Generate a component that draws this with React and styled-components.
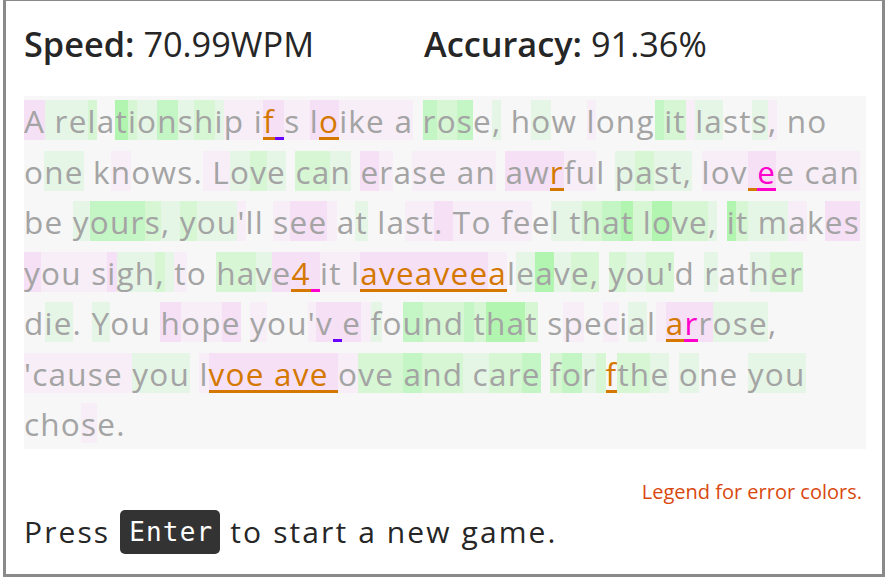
import React from 'react';
import styled, { createGlobalStyle } from 'styled-components';

const GlobalStyle = createGlobalStyle`
  body {
    margin: 0;
    background: #fff;
    font-family: "Open Sans", "DejaVu Sans", sans-serif;
    color: #262626;
  }
`;

const Frame = styled.div`
  box-sizing: border-box;
  width: 882px;
  height: 579px;
  margin: -2px 0 0 3px;
  border: 3px solid #8a8a8a;
  padding: 0 16px 0 18px;
  display: flex;
  flex-direction: column;
`;

const Stats = styled.div`
  display: flex;
  gap: 110px;
  height: 95px;
  flex-shrink: 0;
  align-items: flex-start;
  padding-top: 23px;
  box-sizing: border-box;
  font-size: 34.3px;
`;

const Stat = styled.div`
  line-height: 40px;
  b {
    font-weight: 600;
  }
`;

const Passage = styled.div`
  flex-shrink: 0;
  background: #f7f7f7;
  color: #a4a4a4;
  font-size: 31.5px;
  letter-spacing: 1.22px;
  line-height: 50.5px;
  height: 353px;
`;

const Line = styled.div`
  white-space: pre;
`;

const bgs = {
  p1: '#f7eef7',
  p2: '#f6e0f6',
  g1: '#e6f6e6',
  g2: '#d6f6d4',
  g3: '#c4f5c4',
  g4: '#b2f5b0',
};

const marks = {
  o: { color: '#d47800', line: '#d47800' },
  m: { color: '#ff00cc', line: '#ff00cc' },
  v: { line: '#6a00ff' },
  mu: { line: '#ff00cc' },
  ou: { line: '#d47800' },
};

const layers = (bg, mark) => {
  const out = [];
  if (marks[mark]) {
    const c = marks[mark].line;
    out.push(`linear-gradient(${c}, ${c}) 0 38px / 100% 3px no-repeat`);
  }
  if (bgs[bg]) {
    const c = bgs[bg];
    out.push(`linear-gradient(${c}, ${c}) 0 1px / 100% 40px no-repeat`);
  }
  return out.length ? out.join(', ') : 'none';
};

const Char = styled.span`
  background: ${(p) => layers(p.$bg, p.$mark)};
  color: ${(p) => (marks[p.$mark] && marks[p.$mark].color) || 'inherit'};
`;

const Legend = styled.div`
  flex-shrink: 0;
  margin-top: 31px;
  padding-right: 4px;
  text-align: right;
  color: #d9480f;
  font-size: 20px;
  line-height: 24px;
`;

const Prompt = styled.div`
  flex-shrink: 0;
  font-size: 30px;
  letter-spacing: 2.1px;
  line-height: 44px;
  margin-top: 6px;
`;

const Key = styled.kbd`
  display: inline-block;
  vertical-align: top;
  background: #333;
  color: #fff;
  font-family: "DejaVu Sans Mono", monospace;
  font-size: 26px;
  letter-spacing: 1.2px;
  line-height: 44px;
  padding: 0 7px 0 9px;
  border-radius: 5px;
`;

const lines = [
  [
    ['A', 'p2'], [' re', 'g1'], ['l', 'g2'], ['a', ''], ['t', 'g4'], ['i', 'g2'],
    ['o', 'g1'], ['n', 'g3'], ['s', 'g1'], ['h', 'g2'], ['i', 'g1'], ['p ', 'p1'],
    ['i', 'p1'], ['f', 'p2', 'o'], [' ', 'p2', 'v'], ['s ', 'p1'], ['l', 'p2'],
    ['o', 'p2', 'o'], ['ike a', 'p1'], [' ', ''], ['r', 'g3'], ['o', 'g2'],
    ['s', 'g3'], ['e', ''], [',', 'g1'], [' h', ''], ['o', 'g1'], ['w ', ''],
    ['l', 'p1'], ['ong', ''], [' ', 'g3'], ['it', 'g2'], [' ', 'p1'], ['la', 'g1'],
    ['st', ''], ['s', 'g1'], [',', 'p1'], [' no', ''],
  ],
  [
    ['o', ''], ['ne', 'g1'], [' k', ''], ['n', 'p1'], ['ows.', ''], [' L', 'p1'],
    ['o', 'g1'], ['v', 'g2'], ['e', 'g1'], [' ', ''], ['ca', 'g2'], ['n', 'g1'],
    [' ', ''], ['e', 'p2'], ['r', 'p1'], ['a', ''], ['se ', 'p1'], ['an', 'p1'],
    [' ', ''], ['aw', 'p2'], ['r', 'p2', 'o'], ['fu', 'p1'], ['l ', ''], ['p', 'g1'],
    ['a', 'g2'], ['st,', 'g1'], [' ', ''], ['lov', 'p1'], [' ', 'p2', 'ou'],
    ['e', 'p2', 'm'], ['e can', 'p1'],
  ],
  [
    ['be ', ''], ['y', 'g1'], ['our', 'g3'], ['s', 'g2'], [', ', 'g1'], ['y', 'g2'],
    ['ou', 'g1'], ["'", 'p1'], ['ll ', ''], ['s', 'p1'], ['ee', 'p2'], [' ', 'p1'],
    ['a', ''], ['t', 'g1'], [' la', ''], ['st', 'p1'], ['. ', 'p2'], ['To fe', 'p1'],
    ['e', ''], ['l ', 'g1'], ['t', 'g1'], ['h', 'g2'], ['a', 'g3'], ['t', 'g4'],
    [' l', 'g2'], ['o', 'g4'], ['ve', 'g2'], [',', 'g1'], [' ', ''], ['i', 'g4'],
    ['t', 'g2'], [' m', 'g1'], ['a', 'p1'], ['k', ''], ['es', 'p2'],
  ],
  [
    ['y', 'p2'], ['ou s', 'p1'], ['i', 'p2'], ['gh', 'g1'], [',', 'g2'], [' ', 'g1'],
    ['t', 'p1'], ['o ', ''], ['ha', 'g2'], ['v', 'g1'], ['e', 'p2'], ['4', 'p2', 'o'],
    [' ', 'p2', 'mu'], ['it l', 'p1'], ['aveavee', 'p2', 'o'], ['a', 'p1', 'o'],
    ['l', ''], ['e', 'g1'], ['a', 'g4'], ['v', 'g1'], ['e,', 'g2'], [' ', ''],
    ['y', 'g2'], ['o', 'g1'], ["u'", 'g2'], ['d ', ''], ['r', 'g1'], ['at', ''],
    ['h', 'g1'], ['er', 'g2'],
  ],
  [
    ['d', ''], ['ie', 'g1'], ['. ', ''], ['Y', 'g1'], ['ou ', ''], ['h', 'p2'],
    ['op', 'p1'], ['e', 'p2'], [' ', ''], ['y', 'p1'], ['ou', ''], ["'", 'p1'],
    ['v', 'p2'], [' ', 'p2', 'v'], ['e', 'p2'], [' ', 'p1'], ['f', 'g1'], ['o', ''],
    ['u', 'g3'], ['nd', 'g2'], [' ', 'g3'], ['t', 'g2'], ['ha', 'g4'], ['t', 'g2'],
    [' s', ''], ['p', 'p1'], ['e', ''], ['c', 'p1'], ['i', ''], ['a', 'g1'], ['l', ''],
    [' ', 'p1'], ['a', 'p2', 'o'], ['r', 'p2', 'm'], ['r', 'p2'], ['ose', 'g1'],
    [',', ''],
  ],
  [
    ["'cause ", 'p1'], ['you', 'g1'], [' ', ''], ['l', 'p1'], ['voe ave ', 'p2', 'o'],
    ['o', 'p1'], ['ve ', 'g2'], ['a', 'g3'], ['nd', 'g2'], [' c', 'g1'], ['ar', 'g2'],
    ['e', 'g3'], [' ', ''], ['f', 'g2'], ['o', 'g3'], ['r', 'g1'], [' ', 'g2'],
    ['f', '', 'o'], ['th', 'g2'], ['e', 'g1'], [' ', ''], ['o', 'g1'], ['ne ', ''],
    ['you', 'g1'],
  ],
  [['cho', ''], ['s', 'p1'], ['e.', '']],
];

export default function App() {
  return (
    <>
      <GlobalStyle />
      <Frame>
        <Stats>
          <Stat>
            <b>Speed:</b> 70.99WPM
          </Stat>
          <Stat>
            <b>Accuracy:</b> 91.36%
          </Stat>
        </Stats>
        <Passage>
          {lines.map((line, li) => (
            <Line key={li}>
              {line.map(([text, bg, mark], i) => (
                <Char key={i} $bg={bg} $mark={mark}>
                  {text}
                </Char>
              ))}
            </Line>
          ))}
        </Passage>
        <Legend>Legend for error colors.</Legend>
        <Prompt>
          Press <Key>Enter</Key> to start a new game.
        </Prompt>
      </Frame>
    </>
  );
}
